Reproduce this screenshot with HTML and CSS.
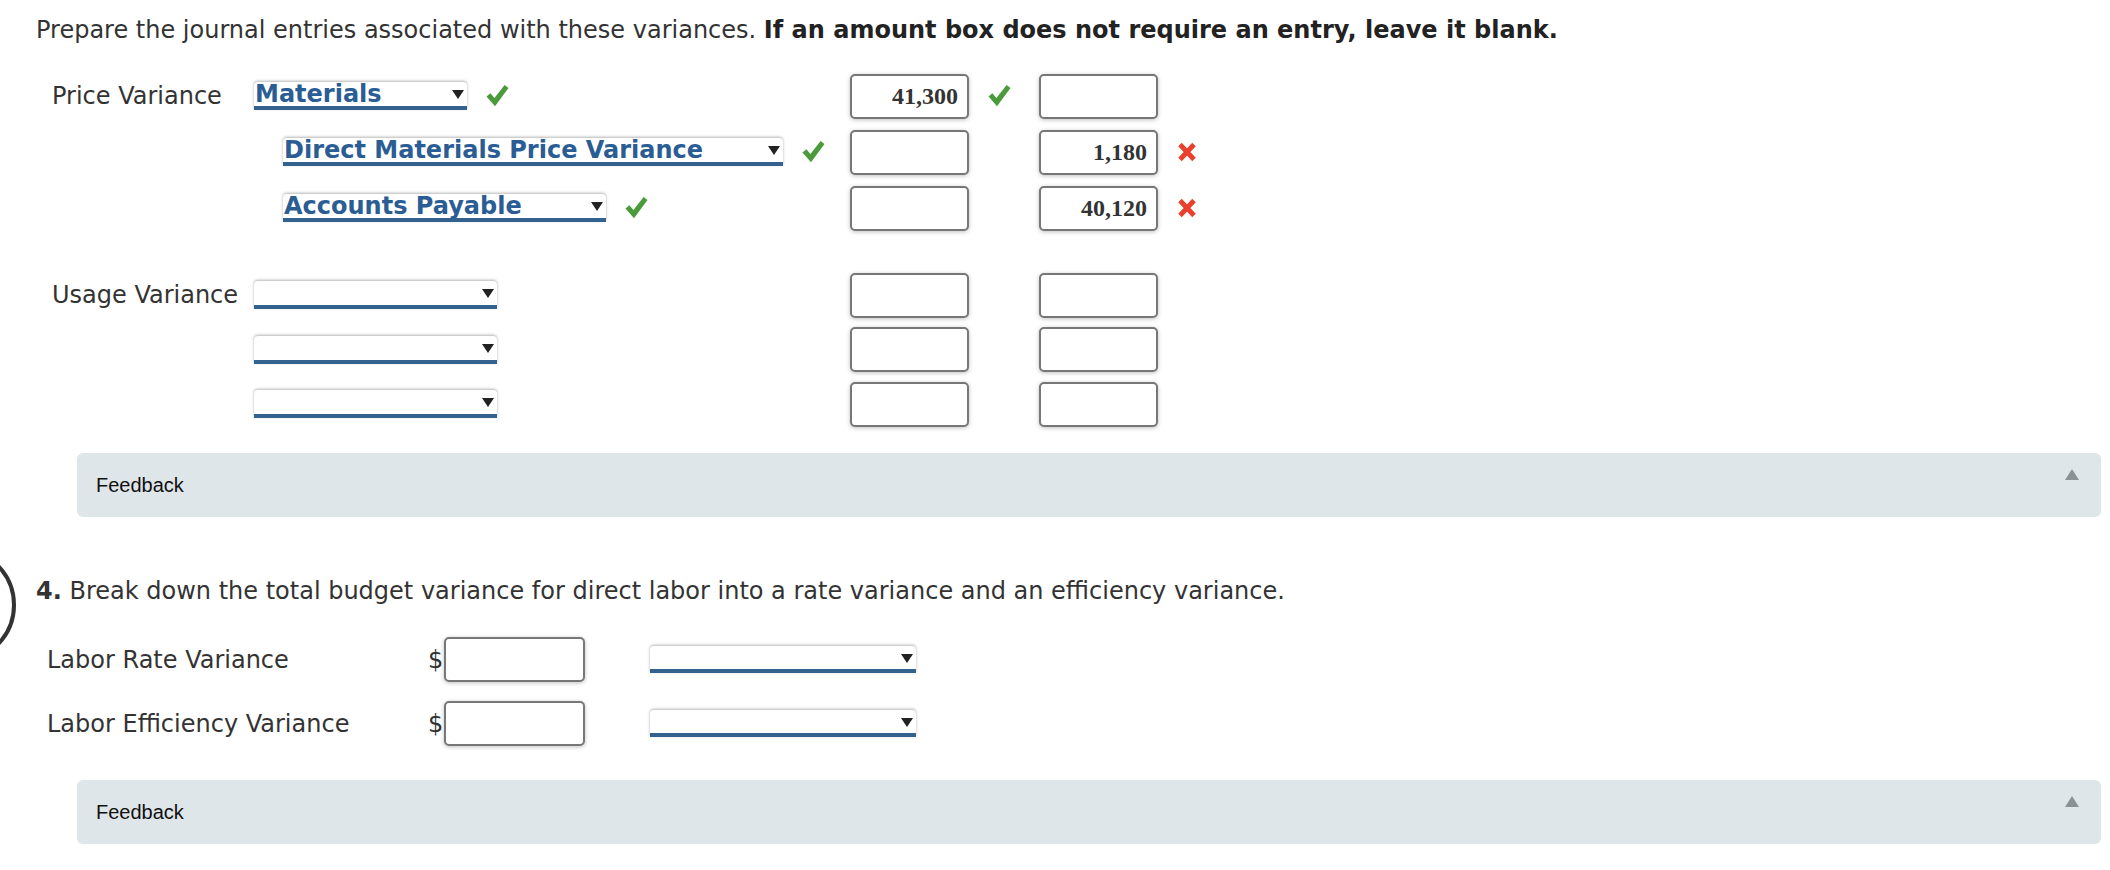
FILE: index.html
```html
<!DOCTYPE html>
<html lang="en">
<head>
  <meta charset="UTF-8">
  <title>Journal Entries - Variances</title>
  <link rel="stylesheet" href="styles.css">
</head>
<body>
  <div class="page">
    <p class="intro">Prepare the journal entries associated with these variances. <b>If an amount box does not require an entry, leave it blank.</b></p>

    <!-- Price variance entry -->
    <div class="journal">
      <div class="entry">
        <div class="entry-label">Price Variance</div>
        <div class="acct">
          <div class="dd dd-mat"><span class="dd-text">Materials</span><span class="dd-arrow"></span></div>
          <svg class="check" viewBox="0 0 24 24"><path d="M0.5 12.5 L4.6 9.2 L8.8 14.2 L19.4 0.6 L23.5 3.6 L9.4 22.6 Z"/></svg>
        </div>
        <div class="amt">41,300</div>
        <div class="mark"><svg class="check" viewBox="0 0 24 24"><path d="M0.5 12.5 L4.6 9.2 L8.8 14.2 L19.4 0.6 L23.5 3.6 L9.4 22.6 Z"/></svg></div>
        <div class="amt"></div>
        <div class="mark"></div>
      </div>
      <div class="entry">
        <div class="entry-label"></div>
        <div class="acct indent">
          <div class="dd dd-dmpv"><span class="dd-text">Direct Materials Price Variance</span><span class="dd-arrow"></span></div>
          <svg class="check" viewBox="0 0 24 24"><path d="M0.5 12.5 L4.6 9.2 L8.8 14.2 L19.4 0.6 L23.5 3.6 L9.4 22.6 Z"/></svg>
        </div>
        <div class="amt"></div>
        <div class="mark"></div>
        <div class="amt">1,180</div>
        <div class="mark"><svg class="cross" viewBox="0 0 20 20"><path d="M3 2.5 L17 17.5 M17 2.5 L3 17.5"/></svg></div>
      </div>
      <div class="entry">
        <div class="entry-label"></div>
        <div class="acct indent">
          <div class="dd dd-ap"><span class="dd-text">Accounts Payable</span><span class="dd-arrow"></span></div>
          <svg class="check" viewBox="0 0 24 24"><path d="M0.5 12.5 L4.6 9.2 L8.8 14.2 L19.4 0.6 L23.5 3.6 L9.4 22.6 Z"/></svg>
        </div>
        <div class="amt"></div>
        <div class="mark"></div>
        <div class="amt">40,120</div>
        <div class="mark"><svg class="cross" viewBox="0 0 20 20"><path d="M3 2.5 L17 17.5 M17 2.5 L3 17.5"/></svg></div>
      </div>
    </div>

    <!-- Usage variance entry -->
    <div class="journal usage">
      <div class="entry">
        <div class="entry-label">Usage Variance</div>
        <div class="acct"><div class="dd dd-blank"><span class="dd-text"></span><span class="dd-arrow"></span></div></div>
        <div class="amt"></div>
        <div class="mark"></div>
        <div class="amt"></div>
        <div class="mark"></div>
      </div>
      <div class="entry">
        <div class="entry-label"></div>
        <div class="acct"><div class="dd dd-blank"><span class="dd-text"></span><span class="dd-arrow"></span></div></div>
        <div class="amt"></div>
        <div class="mark"></div>
        <div class="amt"></div>
        <div class="mark"></div>
      </div>
      <div class="entry">
        <div class="entry-label"></div>
        <div class="acct"><div class="dd dd-blank"><span class="dd-text"></span><span class="dd-arrow"></span></div></div>
        <div class="amt"></div>
        <div class="mark"></div>
        <div class="amt"></div>
        <div class="mark"></div>
      </div>
    </div>

    <div class="feedback">Feedback<span class="fb-toggle"></span></div>

    <!-- Question 4 -->
    <div class="question">
      <span class="bracket"></span>
      <p class="q-text"><b>4.</b> Break down the total budget variance for direct labor into a rate variance and an efficiency variance.</p>
      <div class="labor-row">
        <div class="labor-label">Labor Rate Variance</div>
        <span class="dollar">$</span><div class="amt amt-labor"></div>
        <div class="dd dd-labor"><span class="dd-text"></span><span class="dd-arrow"></span></div>
      </div>
      <div class="labor-row">
        <div class="labor-label">Labor Efficiency Variance</div>
        <span class="dollar">$</span><div class="amt amt-labor"></div>
        <div class="dd dd-labor"><span class="dd-text"></span><span class="dd-arrow"></span></div>
      </div>
    </div>

    <div class="feedback">Feedback<span class="fb-toggle"></span></div>
  </div>
</body>
</html>
```

FILE: styles.css
```css
body {
  margin: 0;
  background: #fff;
  font-family: "DejaVu Sans", Verdana, sans-serif;
  color: #333;
}
.page {
  padding-top: 15px;
}
.intro {
  margin: 0 0 0 36px;
  font-size: 24px;
  line-height: 30px;
  white-space: nowrap;
}
.intro b { color: #222; }

/* journal entry grid */
.journal {
  margin: 23px 0 0 52px;
}
.journal.usage { margin-top: 32px; }
.entry {
  display: flex;
  align-items: center;
  height: 56px;
}
.usage .entry { height: 54.5px; }
.entry-label {
  width: 202px;
  font-size: 24px;
  white-space: nowrap;
}
.acct {
  width: 596px;
  display: flex;
  align-items: center;
  gap: 19px;
}
.acct.indent { padding-left: 29px; width: 567px; }

/* dropdowns */
.dd {
  position: relative;
  height: 24px;
  background: #fff;
  border-bottom: 4px solid #34628f;
  border-radius: 4px 4px 0 0;
  box-shadow: 0 -1px 3px rgba(0, 0, 0, 0.3);
  box-sizing: content-box;
}
.dd-text {
  display: block;
  padding-left: 1px;
  font-size: 24px;
  line-height: 24px;
  font-weight: bold;
  color: #2a5d94;
  white-space: nowrap;
}
.dd-arrow {
  position: absolute;
  right: 3px;
  top: 8px;
  border-left: 6px solid transparent;
  border-right: 6px solid transparent;
  border-top: 9px solid #222;
}
.dd-mat { width: 213px; }
.dd-dmpv { width: 500px; }
.dd-ap { width: 323px; }
.dd-blank { width: 243px; }
.dd-labor { width: 266px; height: 23px; }

.check {
  width: 23px;
  height: 24px;
  flex: none;
}
.check path { fill: #4b9b3d; }
.cross {
  width: 20px;
  height: 22px;
}
.cross path {
  stroke: #e8402c;
  stroke-width: 4.8;
  fill: none;
}

/* amount boxes */
.amt {
  width: 119px;
  height: 45px;
  box-sizing: border-box;
  border: 2px solid #777;
  border-radius: 5px;
  box-shadow: 0 1px 4px rgba(0, 0, 0, 0.25);
  background: #fff;
  padding-right: 9px;
  text-align: right;
  font-family: "Liberation Serif", "Times New Roman", serif;
  font-weight: bold;
  font-size: 24px;
  line-height: 41px;
  color: #333;
  flex: none;
}
.mark {
  width: 70px;
  padding-left: 19px;
  box-sizing: border-box;
  display: flex;
  align-items: center;
}

/* feedback bar */
.feedback {
  position: relative;
  margin: 21px 9px 0 77px;
  height: 64px;
  padding-left: 19px;
  border-radius: 6px;
  background: #dfe6ea;
  font-family: "Liberation Sans", Arial, sans-serif;
  font-size: 20px;
  line-height: 64px;
  color: #111;
}
.fb-toggle {
  position: absolute;
  right: 22px;
  top: 16px;
  border-left: 7px solid transparent;
  border-right: 7px solid transparent;
  border-bottom: 11px solid #8c9195;
}

/* question 4 */
.question {
  position: relative;
  margin-top: 59px;
}
.bracket {
  position: absolute;
  left: -100px;
  top: -29px;
  width: 116px;
  height: 116px;
  box-sizing: border-box;
  border: 4px solid #333;
  border-radius: 50%;
}
.q-text {
  margin: 0 0 0 36px;
  font-size: 24px;
  line-height: 30px;
  white-space: nowrap;
}
.q-text b { color: #333; }
.labor-row {
  display: flex;
  align-items: center;
  height: 64px;
  margin-left: 47px;
}
.labor-row:first-of-type { margin-top: 22px; }
.labor-label {
  width: 381px;
  font-size: 24px;
}
.dollar {
  width: 16px;
  font-size: 24px;
}
.amt-labor { width: 141px; margin-right: 65px; }
.question + .feedback { margin-top: 24px; }
```
